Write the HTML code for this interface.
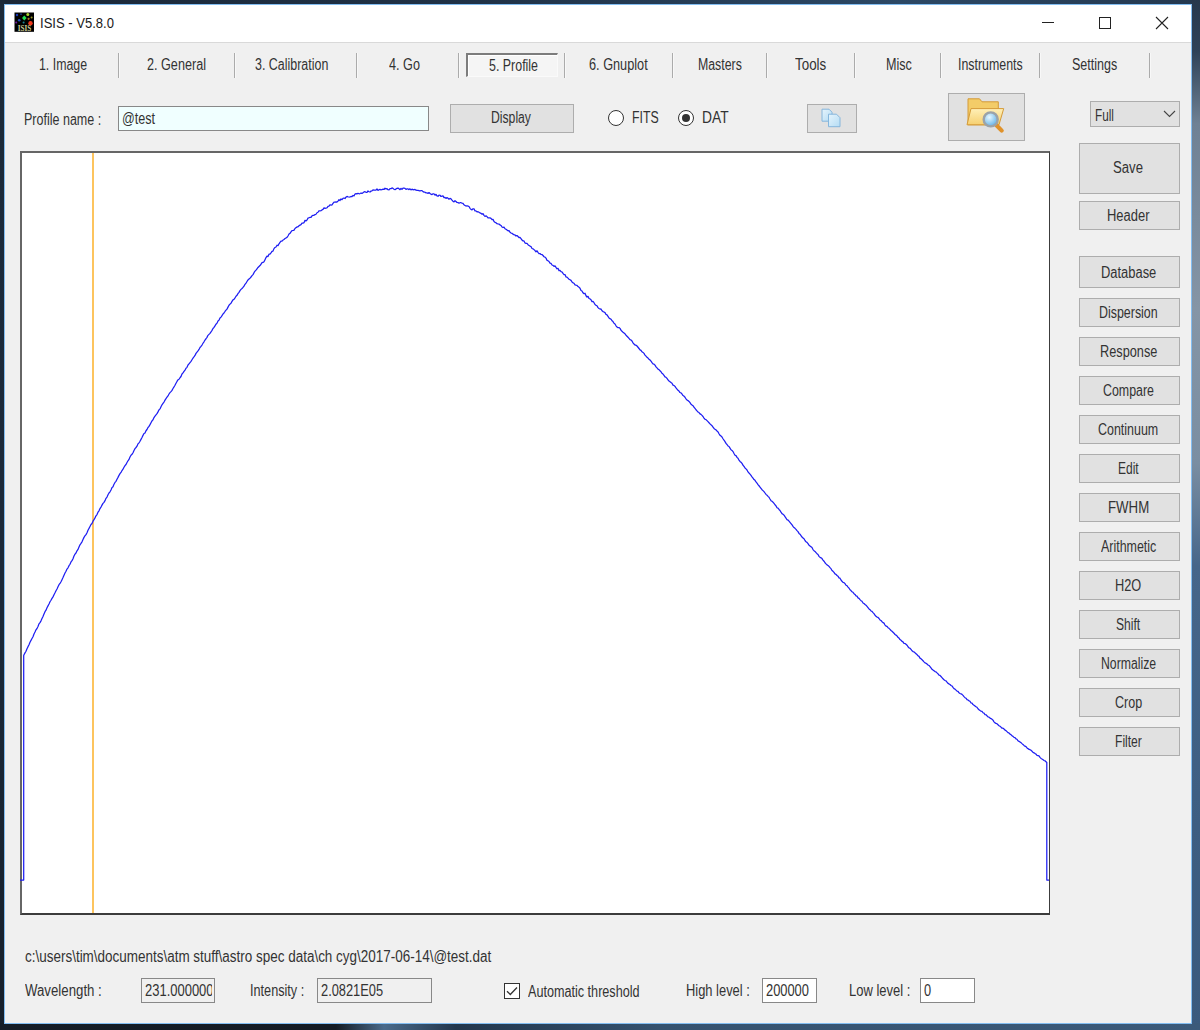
<!DOCTYPE html>
<html><head><meta charset="utf-8"><style>
html,body{margin:0;padding:0;}
body{width:1200px;height:1030px;position:relative;overflow:hidden;background:linear-gradient(90deg,#1b2a3b 0%,#22364c 60%,#3a5878 100%);font-family:"Liberation Sans",sans-serif;}
.t{position:absolute;white-space:pre;line-height:20px;transform-origin:0 15px;font-family:"Liberation Sans",sans-serif;}
</style></head><body>
<div style="position:absolute;left:0;top:0;width:1200px;height:6px;background:linear-gradient(90deg,#1b2838 0%,#203247 40%,#2c4865 75%,#24384f 100%)"></div>
<div style="position:absolute;left:0;top:0;width:5px;height:1030px;background:linear-gradient(180deg,#1c2a3a 0%,#1b2939 60%,#161f2b 100%)"></div>
<div style="position:absolute;left:1191px;top:0;width:9px;height:1030px;background:linear-gradient(180deg,#26384c 0%,#2e4258 5%,#6f8194 12%,#8595a6 30%,#7a8ea2 45%,#46668a 55%,#3d5e82 80%,#3a5a7d 100%)"></div>
<div style="position:absolute;left:0;top:1023px;width:1200px;height:7px;background:linear-gradient(90deg,#151d27 0%,#141b24 28%,#4a6a8a 32%,#22364c 38%,#35526f 55%,#3b5a7a 100%)"></div>
<div style="position:absolute;left:4px;top:4px;width:1188px;height:1020px;box-sizing:border-box;border:1px solid #82bdf1;background:#f0f0f0"></div>
<div style="position:absolute;left:5px;top:5px;width:1186px;height:37px;background:#fff;border-bottom:1px solid #d9d9d9"></div>
<svg style="position:absolute;left:14px;top:12px" width="21" height="21" viewBox="0 0 21 21">
<rect x="0.5" y="0.5" width="19.5" height="19.3" fill="#000"/>
<circle cx="3" cy="3" r="1.2" fill="#1838b8"/><circle cx="7" cy="2.2" r="0.9" fill="#1a3a88"/>
<circle cx="13.8" cy="2.6" r="1.5" fill="#a8d030"/><circle cx="17.6" cy="5.6" r="1" fill="#9a9a28"/>
<path d="M10.3 3.6l2.3 2.4-2.3 2.4-2.3-2.4z" fill="#22e050"/><circle cx="14.6" cy="6.8" r="1.1" fill="#b07028"/>
<circle cx="5.2" cy="8.2" r="1.3" fill="#2050c0"/><circle cx="2.2" cy="10.6" r="1" fill="#6a1aa0"/>
<circle cx="9.6" cy="10.6" r="1" fill="#1a8898"/><circle cx="16.5" cy="11.2" r="2.2" fill="#f03a1e"/>
<text x="3.8" y="18.6" font-family="Liberation Serif" font-weight="bold" font-size="7.6" fill="#cfcf98" textLength="13.5" lengthAdjust="spacingAndGlyphs">ISIS</text>
</svg>
<div class="t" style="left:39.50px;top:13.00px;font-size:15.5px;color:#1a1a1a;transform:scaleX(0.8421);">ISIS - V5.8.0</div>
<div style="position:absolute;left:1042px;top:22px;width:12px;height:1px;box-sizing:border-box;background:#222;"></div>
<div style="position:absolute;left:1099px;top:17px;width:12px;height:12px;box-sizing:border-box;border:1px solid #222;"></div>
<svg style="position:absolute;left:1155px;top:16px" width="14" height="14" viewBox="0 0 14 14"><path d="M1 1L13 13M13 1L1 13" stroke="#222" stroke-width="1.1"/></svg>
<div style="position:absolute;left:118px;top:53px;width:1px;height:25px;box-sizing:border-box;background:#ababab;"></div>
<div style="position:absolute;left:119px;top:53px;width:1px;height:25px;box-sizing:border-box;background:#f8f8f8;"></div>
<div style="position:absolute;left:234px;top:53px;width:1px;height:25px;box-sizing:border-box;background:#ababab;"></div>
<div style="position:absolute;left:235px;top:53px;width:1px;height:25px;box-sizing:border-box;background:#f8f8f8;"></div>
<div style="position:absolute;left:356px;top:53px;width:1px;height:25px;box-sizing:border-box;background:#ababab;"></div>
<div style="position:absolute;left:357px;top:53px;width:1px;height:25px;box-sizing:border-box;background:#f8f8f8;"></div>
<div style="position:absolute;left:458px;top:53px;width:1px;height:25px;box-sizing:border-box;background:#ababab;"></div>
<div style="position:absolute;left:459px;top:53px;width:1px;height:25px;box-sizing:border-box;background:#f8f8f8;"></div>
<div style="position:absolute;left:564px;top:53px;width:1px;height:25px;box-sizing:border-box;background:#ababab;"></div>
<div style="position:absolute;left:565px;top:53px;width:1px;height:25px;box-sizing:border-box;background:#f8f8f8;"></div>
<div style="position:absolute;left:672px;top:53px;width:1px;height:25px;box-sizing:border-box;background:#ababab;"></div>
<div style="position:absolute;left:673px;top:53px;width:1px;height:25px;box-sizing:border-box;background:#f8f8f8;"></div>
<div style="position:absolute;left:766px;top:53px;width:1px;height:25px;box-sizing:border-box;background:#ababab;"></div>
<div style="position:absolute;left:767px;top:53px;width:1px;height:25px;box-sizing:border-box;background:#f8f8f8;"></div>
<div style="position:absolute;left:854px;top:53px;width:1px;height:25px;box-sizing:border-box;background:#ababab;"></div>
<div style="position:absolute;left:855px;top:53px;width:1px;height:25px;box-sizing:border-box;background:#f8f8f8;"></div>
<div style="position:absolute;left:940px;top:53px;width:1px;height:25px;box-sizing:border-box;background:#ababab;"></div>
<div style="position:absolute;left:941px;top:53px;width:1px;height:25px;box-sizing:border-box;background:#f8f8f8;"></div>
<div style="position:absolute;left:1039px;top:53px;width:1px;height:25px;box-sizing:border-box;background:#ababab;"></div>
<div style="position:absolute;left:1040px;top:53px;width:1px;height:25px;box-sizing:border-box;background:#f8f8f8;"></div>
<div style="position:absolute;left:1149px;top:53px;width:1px;height:25px;box-sizing:border-box;background:#ababab;"></div>
<div style="position:absolute;left:1150px;top:53px;width:1px;height:25px;box-sizing:border-box;background:#f8f8f8;"></div>
<div style="position:absolute;left:466px;top:53px;width:92px;height:24px;box-sizing:border-box;border-top:2px solid #7c7c7c;border-left:2px solid #7c7c7c;border-right:1px solid #fafafa;border-bottom:1px solid #fafafa;background:#f5f5f5;box-shadow:inset 1px 1px 0 #fff"></div>
<div class="t" style="left:38.50px;top:55.00px;font-size:16px;color:#333;transform:scaleX(0.7711);">1. Image</div>
<div class="t" style="left:146.90px;top:55.00px;font-size:16px;color:#333;transform:scaleX(0.7893);">2. General</div>
<div class="t" style="left:255.00px;top:55.00px;font-size:16px;color:#333;transform:scaleX(0.7777);">3. Calibration</div>
<div class="t" style="left:388.75px;top:55.00px;font-size:16px;color:#333;transform:scaleX(0.7898);">4. Go</div>
<div class="t" style="left:488.60px;top:56.00px;font-size:16px;color:#333;transform:scaleX(0.7762);">5. Profile</div>
<div class="t" style="left:589.20px;top:55.00px;font-size:16px;color:#333;transform:scaleX(0.7946);">6. Gnuplot</div>
<div class="t" style="left:697.90px;top:55.00px;font-size:16px;color:#333;transform:scaleX(0.7701);">Masters</div>
<div class="t" style="left:795.00px;top:55.00px;font-size:16px;color:#333;transform:scaleX(0.8361);">Tools</div>
<div class="t" style="left:886.25px;top:55.00px;font-size:16px;color:#333;transform:scaleX(0.7878);">Misc</div>
<div class="t" style="left:958.00px;top:55.00px;font-size:16px;color:#333;transform:scaleX(0.7737);">Instruments</div>
<div class="t" style="left:1072.30px;top:55.00px;font-size:16px;color:#333;transform:scaleX(0.7810);">Settings</div>
<div class="t" style="left:24.40px;top:110.00px;font-size:16px;color:#333;transform:scaleX(0.7818);">Profile name :</div>
<div style="position:absolute;left:118px;top:106px;width:311px;height:25px;box-sizing:border-box;background:#f0ffff;border:1px solid #888;"></div>
<div class="t" style="left:121.50px;top:109.00px;font-size:16px;color:#333;transform:scaleX(0.7857);">@test</div>
<div style="position:absolute;left:450px;top:104px;width:124px;height:29px;box-sizing:border-box;background:#e1e1e1;border:1px solid #adadad;"></div>
<div class="t" style="left:490.80px;top:108.00px;font-size:16px;color:#333;transform:scaleX(0.7619);">Display</div>
<div style="position:absolute;left:607.5px;top:109.5px;width:16px;height:16px;box-sizing:border-box;border:1px solid #333;border-radius:50%;background:#fff"></div>
<div class="t" style="left:631.50px;top:108.00px;font-size:16px;color:#333;transform:scaleX(0.7682);">FITS</div>
<div style="position:absolute;left:678px;top:109.5px;width:16px;height:16px;box-sizing:border-box;border:1px solid #333;border-radius:50%;background:#fff"></div>
<div style="position:absolute;left:682px;top:113.5px;width:8px;height:8px;border-radius:50%;background:#333"></div>
<div class="t" style="left:701.50px;top:108.00px;font-size:16px;color:#333;transform:scaleX(0.8615);">DAT</div>
<div style="position:absolute;left:807px;top:104px;width:50px;height:29px;box-sizing:border-box;background:#e1e1e1;border:1px solid #adadad;"></div>
<svg style="position:absolute;left:820px;top:107px" width="24" height="24" viewBox="0 0 24 24">
<defs><linearGradient id="dg" x1="0" y1="0" x2="1" y2="1"><stop offset="0" stop-color="#e6f4fc"/><stop offset="1" stop-color="#b4dcf4"/></linearGradient></defs>
<path d="M2 2.2h7l3 3v9h-10z" fill="url(#dg)" stroke="#86b6dc" stroke-width="1"/>
<path d="M8.5 7.2h8l3.5 3.5v9h-11.5z" fill="url(#dg)" stroke="#86b6dc" stroke-width="1"/>
</svg>
<div style="position:absolute;left:948px;top:93px;width:77px;height:48px;box-sizing:border-box;background:#e1e1e1;border:1px solid #adadad;"></div>
<svg style="position:absolute;left:960px;top:94px" width="50" height="44" viewBox="0 0 50 44">
<defs><linearGradient id="fg" x1="0" y1="0" x2="0" y2="1"><stop offset="0" stop-color="#fff0b8"/><stop offset="1" stop-color="#f6d070"/></linearGradient>
<radialGradient id="lg" cx="0.4" cy="0.35" r="0.7"><stop offset="0" stop-color="#e8f8ff"/><stop offset="1" stop-color="#5aaee6"/></radialGradient></defs>
<path d="M8 4.8h11.5l2.5 3h16.3v23h-30.3z" fill="#f3cc68" stroke="#d49a38" stroke-width="1"/>
<path d="M7 30.8l4-16.2h32.7l-4.7 16.2z" fill="url(#fg)" stroke="#d49a38" stroke-width="1"/>
<path d="M35.5 30.2l6.2 6.4" stroke="#e0922a" stroke-width="4.2" stroke-linecap="round"/>
<circle cx="30.7" cy="25.4" r="7" fill="url(#lg)" stroke="#9ca3a8" stroke-width="2.4"/>
</svg>
<div style="position:absolute;left:1090px;top:101px;width:90px;height:26px;box-sizing:border-box;background:#e1e1e1;border:1px solid #adadad;"></div>
<div class="t" style="left:1095.00px;top:105.50px;font-size:16px;color:#333;transform:scaleX(0.7340);">Full</div>
<svg style="position:absolute;left:1163px;top:109px" width="13" height="10" viewBox="0 0 13 10"><path d="M1 2l5.5 5.5L12 2" fill="none" stroke="#444" stroke-width="1.1"/></svg>
<div style="position:absolute;left:1079px;top:143px;width:101px;height:51px;box-sizing:border-box;background:#e1e1e1;border:1px solid #adadad;"></div>
<div class="t" style="left:1113.30px;top:158.00px;font-size:16px;color:#333;transform:scaleX(0.8219);">Save</div>
<div style="position:absolute;left:1079px;top:201px;width:101px;height:29px;box-sizing:border-box;background:#e1e1e1;border:1px solid #adadad;"></div>
<div class="t" style="left:1107.05px;top:206.00px;font-size:16px;color:#333;transform:scaleX(0.8095);">Header</div>
<div style="position:absolute;left:1079px;top:256px;width:101px;height:32px;box-sizing:border-box;background:#e1e1e1;border:1px solid #adadad;"></div>
<div class="t" style="left:1100.65px;top:263.00px;font-size:16px;color:#333;transform:scaleX(0.8073);">Database</div>
<div style="position:absolute;left:1079px;top:298px;width:101px;height:29px;box-sizing:border-box;background:#e1e1e1;border:1px solid #adadad;"></div>
<div class="t" style="left:1098.95px;top:302.80px;font-size:16px;color:#333;transform:scaleX(0.7762);">Dispersion</div>
<div style="position:absolute;left:1079px;top:337px;width:101px;height:29px;box-sizing:border-box;background:#e1e1e1;border:1px solid #adadad;"></div>
<div class="t" style="left:1099.65px;top:341.80px;font-size:16px;color:#333;transform:scaleX(0.7958);">Response</div>
<div style="position:absolute;left:1079px;top:376px;width:101px;height:29px;box-sizing:border-box;background:#e1e1e1;border:1px solid #adadad;"></div>
<div class="t" style="left:1102.85px;top:380.80px;font-size:16px;color:#333;transform:scaleX(0.7741);">Compare</div>
<div style="position:absolute;left:1079px;top:415px;width:101px;height:29px;box-sizing:border-box;background:#e1e1e1;border:1px solid #adadad;"></div>
<div class="t" style="left:1098.20px;top:419.80px;font-size:16px;color:#333;transform:scaleX(0.7780);">Continuum</div>
<div style="position:absolute;left:1079px;top:454px;width:101px;height:29px;box-sizing:border-box;background:#e1e1e1;border:1px solid #adadad;"></div>
<div class="t" style="left:1117.95px;top:458.80px;font-size:16px;color:#333;transform:scaleX(0.7493);">Edit</div>
<div style="position:absolute;left:1079px;top:493px;width:101px;height:29px;box-sizing:border-box;background:#e1e1e1;border:1px solid #adadad;"></div>
<div class="t" style="left:1107.70px;top:497.80px;font-size:16px;color:#333;transform:scaleX(0.8281);">FWHM</div>
<div style="position:absolute;left:1079px;top:532px;width:101px;height:29px;box-sizing:border-box;background:#e1e1e1;border:1px solid #adadad;"></div>
<div class="t" style="left:1100.65px;top:536.80px;font-size:16px;color:#333;transform:scaleX(0.7775);">Arithmetic</div>
<div style="position:absolute;left:1079px;top:571px;width:101px;height:29px;box-sizing:border-box;background:#e1e1e1;border:1px solid #adadad;"></div>
<div class="t" style="left:1115.20px;top:575.80px;font-size:16px;color:#333;transform:scaleX(0.7970);">H2O</div>
<div style="position:absolute;left:1079px;top:610px;width:101px;height:29px;box-sizing:border-box;background:#e1e1e1;border:1px solid #adadad;"></div>
<div class="t" style="left:1116.25px;top:614.80px;font-size:16px;color:#333;transform:scaleX(0.7531);">Shift</div>
<div style="position:absolute;left:1079px;top:649px;width:101px;height:29px;box-sizing:border-box;background:#e1e1e1;border:1px solid #adadad;"></div>
<div class="t" style="left:1100.75px;top:653.80px;font-size:16px;color:#333;transform:scaleX(0.7653);">Normalize</div>
<div style="position:absolute;left:1079px;top:688px;width:101px;height:29px;box-sizing:border-box;background:#e1e1e1;border:1px solid #adadad;"></div>
<div class="t" style="left:1114.75px;top:692.80px;font-size:16px;color:#333;transform:scaleX(0.7827);">Crop</div>
<div style="position:absolute;left:1079px;top:727px;width:101px;height:29px;box-sizing:border-box;background:#e1e1e1;border:1px solid #adadad;"></div>
<div class="t" style="left:1114.90px;top:731.80px;font-size:16px;color:#333;transform:scaleX(0.7549);">Filter</div>
<div style="position:absolute;left:20px;top:151px;width:1030px;height:764px;box-sizing:border-box;background:#fff;border-style:solid;border-width:2px 1px 2px 2px;border-color:#666 #3c3c3c #3c3c3c #666"></div>
<div style="position:absolute;left:92px;top:153px;width:2px;height:760px;box-sizing:border-box;background:#fdc45e;"></div>
<svg style="position:absolute;left:0;top:0" width="1200" height="1030"><path d="M20 880 L23.7 880 L23.7 655.6 L24.0 654.83 L25.0 652.86 L26.0 651.22 L27.0 648.76 L28.0 646.65 L29.0 644.67 L30.0 642.19 L31.0 640.40 L32.0 638.55 L33.0 636.75 L34.0 634.00 L35.0 632.02 L36.0 629.78 L37.0 628.50 L38.0 626.54 L39.0 623.82 L40.0 622.67 L41.0 620.86 L42.0 618.57 L43.0 616.46 L44.0 613.94 L45.0 611.66 L46.0 610.17 L47.0 607.80 L48.0 605.87 L49.0 603.97 L50.0 601.78 L51.0 600.24 L52.0 598.37 L53.0 596.87 L54.0 594.68 L55.0 592.81 L56.0 590.73 L57.0 588.94 L58.0 586.81 L59.0 584.64 L60.0 583.44 L61.0 581.70 L62.0 579.66 L63.0 577.56 L64.0 575.18 L65.0 573.06 L66.0 571.17 L67.0 569.03 L68.0 567.84 L69.0 565.72 L70.0 564.27 L71.0 561.99 L72.0 560.64 L73.0 558.77 L74.0 555.97 L75.0 554.10 L76.0 553.01 L77.0 550.85 L78.0 549.48 L79.0 547.11 L80.0 544.78 L81.0 543.42 L82.0 541.86 L83.0 539.54 L84.0 537.38 L85.0 535.74 L86.0 534.65 L87.0 532.79 L88.0 530.25 L89.0 528.40 L90.0 526.42 L91.0 524.52 L92.0 523.51 L93.0 521.22 L94.0 519.72 L95.0 517.88 L96.0 515.79 L97.0 514.53 L98.0 512.21 L99.0 510.86 L100.0 508.61 L101.0 507.06 L102.0 505.11 L103.0 503.37 L104.0 502.38 L105.0 500.63 L106.0 498.33 L107.0 497.08 L108.0 494.71 L109.0 493.01 L110.0 491.79 L111.0 489.95 L112.0 487.59 L113.0 486.68 L114.0 484.31 L115.0 482.47 L116.0 481.28 L117.0 479.21 L118.0 477.37 L119.0 475.39 L120.0 473.63 L121.0 472.45 L122.0 470.51 L123.0 469.14 L124.0 467.28 L125.0 465.64 L126.0 464.52 L127.0 462.45 L128.0 460.77 L129.0 459.42 L130.0 457.07 L131.0 455.20 L132.0 454.31 L133.0 452.74 L134.0 450.48 L135.0 448.60 L136.0 447.50 L137.0 446.20 L138.0 443.82 L139.0 442.82 L140.0 441.27 L141.0 439.34 L142.0 437.43 L143.0 435.38 L144.0 433.57 L145.0 432.92 L146.0 430.74 L147.0 429.49 L148.0 427.48 L149.0 426.38 L150.0 424.65 L151.0 422.68 L152.0 420.85 L153.0 419.79 L154.0 417.61 L155.0 416.04 L156.0 414.82 L157.0 413.64 L158.0 411.90 L159.0 409.90 L160.0 408.92 L161.0 406.71 L162.0 404.76 L163.0 403.38 L164.0 402.05 L165.0 400.11 L166.0 398.58 L167.0 397.24 L168.0 395.96 L169.0 393.99 L170.0 392.59 L171.0 391.65 L172.0 390.36 L173.0 388.52 L174.0 386.94 L175.0 385.27 L176.0 383.22 L177.0 381.44 L178.0 379.82 L179.0 379.26 L180.0 377.74 L181.0 376.51 L182.0 374.02 L183.0 372.94 L184.0 371.36 L185.0 370.11 L186.0 368.21 L187.0 367.35 L188.0 365.00 L189.0 363.80 L190.0 362.58 L191.0 361.34 L192.0 359.73 L193.0 358.17 L194.0 356.76 L195.0 355.43 L196.0 353.36 L197.0 352.10 L198.0 350.92 L199.0 349.48 L200.0 347.52 L201.0 346.33 L202.0 345.02 L203.0 343.27 L204.0 341.79 L205.0 340.06 L206.0 338.75 L207.0 337.36 L208.0 335.34 L209.0 334.37 L210.0 333.42 L211.0 331.98 L212.0 330.37 L213.0 328.51 L214.0 327.35 L215.0 325.81 L216.0 324.20 L217.0 323.16 L218.0 320.99 L219.0 320.12 L220.0 318.04 L221.0 317.08 L222.0 315.65 L223.0 313.96 L224.0 312.99 L225.0 311.48 L226.0 310.18 L227.0 309.14 L228.0 307.10 L229.0 305.28 L230.0 304.11 L231.0 303.20 L232.0 301.41 L233.0 299.90 L234.0 299.31 L235.0 297.87 L236.0 296.25 L237.0 295.33 L238.0 293.47 L239.0 292.37 L240.0 290.58 L241.0 289.39 L242.0 288.51 L243.0 287.42 L244.0 286.13 L245.0 284.28 L246.0 283.06 L247.0 281.49 L248.0 279.94 L249.0 278.98 L250.0 278.16 L251.0 277.02 L252.0 275.64 L253.0 274.61 L254.0 272.68 L255.0 271.15 L256.0 270.15 L257.0 268.79 L258.0 267.47 L259.0 266.46 L260.0 265.53 L261.0 264.26 L262.0 262.69 L263.0 262.46 L264.0 261.82 L265.0 259.72 L266.0 257.58 L267.0 256.10 L268.0 256.56 L269.0 254.17 L270.0 254.07 L271.0 252.94 L272.0 251.31 L273.0 251.05 L274.0 248.63 L275.0 247.45 L276.0 247.00 L277.0 245.24 L278.0 245.63 L279.0 243.77 L280.0 242.35 L281.0 241.05 L282.0 241.14 L283.0 240.05 L284.0 239.41 L285.0 238.58 L286.0 237.95 L287.0 237.39 L288.0 236.00 L289.0 233.99 L290.0 233.35 L291.0 231.92 L292.0 230.55 L293.0 230.47 L294.0 230.28 L295.0 228.51 L296.0 227.62 L297.0 226.91 L298.0 226.81 L299.0 225.81 L300.0 225.14 L301.0 224.65 L302.0 223.21 L303.0 223.06 L304.0 222.67 L305.0 220.37 L306.0 220.91 L307.0 220.07 L308.0 218.13 L309.0 217.75 L310.0 217.46 L311.0 217.43 L312.0 215.84 L313.0 215.31 L314.0 215.29 L315.0 214.62 L316.0 214.26 L317.0 212.72 L318.0 212.24 L319.0 210.75 L320.0 210.95 L321.0 210.74 L322.0 209.88 L323.0 209.38 L324.0 207.81 L325.0 208.36 L326.0 208.24 L327.0 207.79 L328.0 206.39 L329.0 206.14 L330.0 204.75 L331.0 205.19 L332.0 204.81 L333.0 203.33 L334.0 202.06 L335.0 202.10 L336.0 201.98 L337.0 202.04 L338.0 201.15 L339.0 199.68 L340.0 200.54 L341.0 198.95 L342.0 199.71 L343.0 198.34 L344.0 198.02 L345.0 198.55 L346.0 197.10 L347.0 196.47 L348.0 196.78 L349.0 197.00 L350.0 197.03 L351.0 196.48 L352.0 196.60 L353.0 195.48 L354.0 195.88 L355.0 194.02 L356.0 193.60 L357.0 193.89 L358.0 193.28 L359.0 193.80 L360.0 193.55 L361.0 193.06 L362.0 193.39 L363.0 192.72 L364.0 191.88 L365.0 191.64 L366.0 192.35 L367.0 192.48 L368.0 190.97 L369.0 191.73 L370.0 192.02 L371.0 191.07 L372.0 190.80 L373.0 189.87 L374.0 190.19 L375.0 190.09 L376.0 190.17 L377.0 188.93 L378.0 190.41 L379.0 189.79 L380.0 189.32 L381.0 189.93 L382.0 189.53 L383.0 189.22 L384.0 189.49 L385.0 188.25 L386.0 188.84 L387.0 188.69 L388.0 189.71 L389.0 189.86 L390.0 188.57 L391.0 188.63 L392.0 187.94 L393.0 188.37 L394.0 189.24 L395.0 189.63 L396.0 188.89 L397.0 188.40 L398.0 188.04 L399.0 188.83 L400.0 189.67 L401.0 188.32 L402.0 189.32 L403.0 188.11 L404.0 188.20 L405.0 188.34 L406.0 189.36 L407.0 188.95 L408.0 188.98 L409.0 189.60 L410.0 188.81 L411.0 189.95 L412.0 189.11 L413.0 189.77 L414.0 189.52 L415.0 189.46 L416.0 190.22 L417.0 190.34 L418.0 190.38 L419.0 190.59 L420.0 191.00 L421.0 190.51 L422.0 190.62 L423.0 191.65 L424.0 192.07 L425.0 192.12 L426.0 192.94 L427.0 192.83 L428.0 193.47 L429.0 192.55 L430.0 193.52 L431.0 194.09 L432.0 194.61 L433.0 193.77 L434.0 193.76 L435.0 195.17 L436.0 194.33 L437.0 195.90 L438.0 196.29 L439.0 195.10 L440.0 195.25 L441.0 196.49 L442.0 196.11 L443.0 195.93 L444.0 197.61 L445.0 197.46 L446.0 198.42 L447.0 197.59 L448.0 198.21 L449.0 199.20 L450.0 198.38 L451.0 198.83 L452.0 200.19 L453.0 201.27 L454.0 201.95 L455.0 200.72 L456.0 201.49 L457.0 202.50 L458.0 202.55 L459.0 203.24 L460.0 202.74 L461.0 202.71 L462.0 203.10 L463.0 203.39 L464.0 204.83 L465.0 205.46 L466.0 206.07 L467.0 205.73 L468.0 206.07 L469.0 206.55 L470.0 208.31 L471.0 209.41 L472.0 209.94 L473.0 208.78 L474.0 208.80 L475.0 210.97 L476.0 210.92 L477.0 211.90 L478.0 211.67 L479.0 212.29 L480.0 212.94 L481.0 213.34 L482.0 214.20 L483.0 213.65 L484.0 215.31 L485.0 216.43 L486.0 215.81 L487.0 216.63 L488.0 217.84 L489.0 217.91 L490.0 217.95 L491.0 218.35 L492.0 219.59 L493.0 219.36 L494.0 221.52 L495.0 222.33 L496.0 222.81 L497.0 223.71 L498.0 223.94 L499.0 224.02 L500.0 224.91 L501.0 225.43 L502.0 227.00 L503.0 227.53 L504.0 227.06 L505.0 228.74 L506.0 229.33 L507.0 230.05 L508.0 230.81 L509.0 230.69 L510.0 232.16 L511.0 233.01 L512.0 233.37 L513.0 234.13 L514.0 234.85 L515.0 234.84 L516.0 236.00 L517.0 235.53 L518.0 236.49 L519.0 237.53 L520.0 237.42 L521.0 238.64 L522.0 240.06 L523.0 240.95 L524.0 240.94 L525.0 242.93 L526.0 243.44 L527.0 243.48 L528.0 244.71 L529.0 245.41 L530.0 246.09 L531.0 246.56 L532.0 248.48 L533.0 248.83 L534.0 249.63 L535.0 250.55 L536.0 251.81 L537.0 250.81 L538.0 252.35 L539.0 253.59 L540.0 253.54 L541.0 254.43 L542.0 254.57 L543.0 255.51 L544.0 256.73 L545.0 257.10 L546.0 258.13 L547.0 260.32 L548.0 260.79 L549.0 261.46 L550.0 263.18 L551.0 263.46 L552.0 265.02 L553.0 265.34 L554.0 266.42 L555.0 265.87 L556.0 267.43 L557.0 268.80 L558.0 268.37 L559.0 270.69 L560.0 270.40 L561.0 271.61 L562.0 271.98 L563.0 273.39 L564.0 274.65 L565.0 274.54 L566.0 276.96 L567.0 277.20 L568.0 278.15 L569.0 279.22 L570.0 279.71 L571.0 280.36 L572.0 281.95 L573.0 282.86 L574.0 283.22 L575.0 284.88 L576.0 285.15 L577.0 285.36 L578.0 286.58 L579.0 287.18 L580.0 288.27 L581.0 290.45 L582.0 290.98 L583.0 292.84 L584.0 293.72 L585.0 293.27 L586.0 295.75 L587.0 297.01 L588.0 296.30 L589.0 298.52 L590.0 298.85 L591.0 299.75 L592.0 301.70 L593.0 301.46 L594.0 302.70 L595.0 304.57 L596.0 305.35 L597.0 305.78 L598.0 307.64 L599.0 308.53 L600.0 309.07 L601.0 308.98 L602.0 310.72 L603.0 311.57 L604.0 312.02 L605.0 312.59 L606.0 314.43 L607.0 314.84 L608.0 316.34 L609.0 317.92 L610.0 318.65 L611.0 319.21 L612.0 320.75 L613.0 321.57 L614.0 323.26 L615.0 323.96 L616.0 325.83 L617.0 326.98 L618.0 327.60 L619.0 327.53 L620.0 328.38 L621.0 330.23 L622.0 331.34 L623.0 332.22 L624.0 332.93 L625.0 333.78 L626.0 335.23 L627.0 336.24 L628.0 337.30 L629.0 338.39 L630.0 339.58 L631.0 340.04 L632.0 341.00 L633.0 342.83 L634.0 344.01 L635.0 345.04 L636.0 345.17 L637.0 346.01 L638.0 347.24 L639.0 348.51 L640.0 349.83 L641.0 350.38 L642.0 351.79 L643.0 352.42 L644.0 353.39 L645.0 355.07 L646.0 356.14 L647.0 357.30 L648.0 358.10 L649.0 359.21 L650.0 359.98 L651.0 361.12 L652.0 362.64 L653.0 363.92 L654.0 364.20 L655.0 365.12 L656.0 366.90 L657.0 367.94 L658.0 369.16 L659.0 369.65 L660.0 370.81 L661.0 371.71 L662.0 373.35 L663.0 374.07 L664.0 375.36 L665.0 376.85 L666.0 377.30 L667.0 378.45 L668.0 379.76 L669.0 381.08 L670.0 381.67 L671.0 382.55 L672.0 383.27 L673.0 385.11 L674.0 385.49 L675.0 386.39 L676.0 387.94 L677.0 389.05 L678.0 390.34 L679.0 391.04 L680.0 392.54 L681.0 392.94 L682.0 393.99 L683.0 395.54 L684.0 396.09 L685.0 397.27 L686.0 398.83 L687.0 399.98 L688.0 400.61 L689.0 401.41 L690.0 402.64 L691.0 404.15 L692.0 404.93 L693.0 405.64 L694.0 407.27 L695.0 408.31 L696.0 409.75 L697.0 410.92 L698.0 411.98 L699.0 412.51 L700.0 413.84 L701.0 414.41 L702.0 415.35 L703.0 416.47 L704.0 418.12 L705.0 419.28 L706.0 419.64 L707.0 420.64 L708.0 421.68 L709.0 422.72 L710.0 423.80 L711.0 424.84 L712.0 425.67 L713.0 427.06 L714.0 428.44 L715.0 429.28 L716.0 429.87 L717.0 430.99 L718.0 431.86 L719.0 433.73 L720.0 435.33 L721.0 436.08 L722.0 436.99 L723.0 438.76 L724.0 440.23 L725.0 441.62 L726.0 443.41 L727.0 444.50 L728.0 445.93 L729.0 446.47 L730.0 448.12 L731.0 449.79 L732.0 450.41 L733.0 451.55 L734.0 453.53 L735.0 455.19 L736.0 455.68 L737.0 457.38 L738.0 458.24 L739.0 460.09 L740.0 461.42 L741.0 462.27 L742.0 463.42 L743.0 465.27 L744.0 466.43 L745.0 467.95 L746.0 468.88 L747.0 470.00 L748.0 471.93 L749.0 473.04 L750.0 474.08 L751.0 475.33 L752.0 476.79 L753.0 478.09 L754.0 479.59 L755.0 480.35 L756.0 481.93 L757.0 483.09 L758.0 484.52 L759.0 485.76 L760.0 487.04 L761.0 488.35 L762.0 489.68 L763.0 490.59 L764.0 491.62 L765.0 493.00 L766.0 494.37 L767.0 495.21 L768.0 496.34 L769.0 497.24 L770.0 499.03 L771.0 500.67 L772.0 501.31 L773.0 502.15 L774.0 503.31 L775.0 504.75 L776.0 505.87 L777.0 507.79 L778.0 508.18 L779.0 509.44 L780.0 510.45 L781.0 512.18 L782.0 513.65 L783.0 514.25 L784.0 515.16 L785.0 516.71 L786.0 518.13 L787.0 519.72 L788.0 520.04 L789.0 521.09 L790.0 522.31 L791.0 523.53 L792.0 524.73 L793.0 526.44 L794.0 527.60 L795.0 528.36 L796.0 529.37 L797.0 530.60 L798.0 531.66 L799.0 533.43 L800.0 534.24 L801.0 535.57 L802.0 537.06 L803.0 537.92 L804.0 538.75 L805.0 540.50 L806.0 541.82 L807.0 542.37 L808.0 543.59 L809.0 545.19 L810.0 545.91 L811.0 546.65 L812.0 547.49 L813.0 549.53 L814.0 550.72 L815.0 551.40 L816.0 552.56 L817.0 553.68 L818.0 554.52 L819.0 556.35 L820.0 557.28 L821.0 557.87 L822.0 558.60 L823.0 560.12 L824.0 561.21 L825.0 562.77 L826.0 563.89 L827.0 564.88 L828.0 565.44 L829.0 566.40 L830.0 567.64 L831.0 568.69 L832.0 570.44 L833.0 571.30 L834.0 572.45 L835.0 573.94 L836.0 574.32 L837.0 575.51 L838.0 576.19 L839.0 577.84 L840.0 578.21 L841.0 580.00 L842.0 581.27 L843.0 582.36 L844.0 582.61 L845.0 583.67 L846.0 585.22 L847.0 585.71 L848.0 587.05 L849.0 588.15 L850.0 589.75 L851.0 590.52 L852.0 591.80 L853.0 592.29 L854.0 593.72 L855.0 594.45 L856.0 595.95 L857.0 596.20 L858.0 597.84 L859.0 598.34 L860.0 599.60 L861.0 600.67 L862.0 601.30 L863.0 602.96 L864.0 603.57 L865.0 604.48 L866.0 605.21 L867.0 606.41 L868.0 607.64 L869.0 608.98 L870.0 609.68 L871.0 610.97 L872.0 611.40 L873.0 612.58 L874.0 613.69 L875.0 615.28 L876.0 616.27 L877.0 617.07 L878.0 617.31 L879.0 618.51 L880.0 619.92 L881.0 620.49 L882.0 621.73 L883.0 622.66 L884.0 623.14 L885.0 625.07 L886.0 626.07 L887.0 626.40 L888.0 627.67 L889.0 628.35 L890.0 629.35 L891.0 630.50 L892.0 631.25 L893.0 632.20 L894.0 633.22 L895.0 634.50 L896.0 635.09 L897.0 635.89 L898.0 637.39 L899.0 638.04 L900.0 639.59 L901.0 640.27 L902.0 641.33 L903.0 641.88 L904.0 643.27 L905.0 643.51 L906.0 644.33 L907.0 645.19 L908.0 646.75 L909.0 647.88 L910.0 648.28 L911.0 649.32 L912.0 650.76 L913.0 651.55 L914.0 651.89 L915.0 652.82 L916.0 653.67 L917.0 654.53 L918.0 655.75 L919.0 656.38 L920.0 658.16 L921.0 658.75 L922.0 659.67 L923.0 660.74 L924.0 661.82 L925.0 662.83 L926.0 663.28 L927.0 664.02 L928.0 664.97 L929.0 665.45 L930.0 666.67 L931.0 667.97 L932.0 669.28 L933.0 670.07 L934.0 670.80 L935.0 671.59 L936.0 671.81 L937.0 672.88 L938.0 673.82 L939.0 675.06 L940.0 675.44 L941.0 676.49 L942.0 677.56 L943.0 678.80 L944.0 679.80 L945.0 680.48 L946.0 680.81 L947.0 682.21 L948.0 683.37 L949.0 683.92 L950.0 684.50 L951.0 685.45 L952.0 685.95 L953.0 687.35 L954.0 688.65 L955.0 689.10 L956.0 690.08 L957.0 691.10 L958.0 691.30 L959.0 692.81 L960.0 693.48 L961.0 693.81 L962.0 694.41 L963.0 695.37 L964.0 696.62 L965.0 697.69 L966.0 698.19 L967.0 699.61 L968.0 699.97 L969.0 700.81 L970.0 701.27 L971.0 702.95 L972.0 703.08 L973.0 704.58 L974.0 705.18 L975.0 705.98 L976.0 706.80 L977.0 707.30 L978.0 708.76 L979.0 709.83 L980.0 710.53 L981.0 711.08 L982.0 711.31 L983.0 712.76 L984.0 713.14 L985.0 714.52 L986.0 714.76 L987.0 715.80 L988.0 716.95 L989.0 717.14 L990.0 718.19 L991.0 718.55 L992.0 719.19 L993.0 720.12 L994.0 721.85 L995.0 722.83 L996.0 723.37 L997.0 723.72 L998.0 724.81 L999.0 725.75 L1000.0 726.20 L1001.0 727.14 L1002.0 728.20 L1003.0 728.20 L1004.0 728.99 L1005.0 730.08 L1006.0 730.59 L1007.0 731.58 L1008.0 732.62 L1009.0 733.03 L1010.0 734.10 L1011.0 734.68 L1012.0 735.74 L1013.0 736.34 L1014.0 737.41 L1015.0 737.60 L1016.0 738.93 L1017.0 739.26 L1018.0 740.83 L1019.0 741.40 L1020.0 741.98 L1021.0 742.64 L1022.0 743.62 L1023.0 744.51 L1024.0 745.39 L1025.0 746.17 L1026.0 746.65 L1027.0 747.91 L1028.0 748.62 L1029.0 749.39 L1030.0 749.66 L1031.0 750.33 L1032.0 751.21 L1033.0 752.37 L1034.0 752.81 L1035.0 753.49 L1036.0 754.12 L1037.0 755.36 L1038.0 755.59 L1039.0 755.92 L1040.0 757.31 L1041.0 758.41 L1042.0 759.06 L1043.0 759.63 L1044.0 760.50 L1045.0 760.79 L1046.0 761.73 L1046.8 762.5 L1046.8 880 L1049 880" fill="none" stroke="#1e1ef2" stroke-width="1.25" stroke-linejoin="round"/></svg>
<div class="t" style="left:24.50px;top:947.00px;font-size:16px;color:#333;transform:scaleX(0.8416);">c:\users\tim\documents\atm stuff\astro spec data\ch cyg\2017-06-14\@test.dat</div>
<div class="t" style="left:24.50px;top:981.00px;font-size:16px;color:#333;transform:scaleX(0.8275);">Wavelength :</div>
<div style="position:absolute;left:141px;top:978px;width:74px;height:25px;box-sizing:border-box;background:#f0f0f0;border:1px solid #888;"></div>
<div style="position:absolute;left:143px;top:979px;width:69px;height:23px;overflow:hidden">
<div class="t" style="left:1.75px;top:2.00px;font-size:16px;color:#333;transform:scaleX(0.8107);">231.000000</div>
</div>
<div class="t" style="left:249.50px;top:981.00px;font-size:16px;color:#333;transform:scaleX(0.7920);">Intensity :</div>
<div style="position:absolute;left:317px;top:978px;width:115px;height:25px;box-sizing:border-box;background:#f0f0f0;border:1px solid #888;"></div>
<div class="t" style="left:321.00px;top:981.00px;font-size:16px;color:#333;transform:scaleX(0.8013);">2.0821E05</div>
<div style="position:absolute;left:504px;top:983px;width:16px;height:16px;box-sizing:border-box;background:#fff;border:1px solid #333;"></div>
<svg style="position:absolute;left:504px;top:983px" width="16" height="16" viewBox="0 0 16 16"><path d="M3 8.2l3.3 3.3L13 4.5" fill="none" stroke="#333" stroke-width="1.3"/></svg>
<div class="t" style="left:528.00px;top:982.00px;font-size:16px;color:#333;transform:scaleX(0.7887);">Automatic threshold</div>
<div class="t" style="left:686.25px;top:981.00px;font-size:16px;color:#333;transform:scaleX(0.8057);">High level :</div>
<div style="position:absolute;left:762px;top:978px;width:55px;height:25px;box-sizing:border-box;background:#fff;border:1px solid #888;"></div>
<div class="t" style="left:766.00px;top:981.00px;font-size:16px;color:#333;transform:scaleX(0.8037);">200000</div>
<div class="t" style="left:848.80px;top:981.00px;font-size:16px;color:#333;transform:scaleX(0.8106);">Low level :</div>
<div style="position:absolute;left:920px;top:978px;width:55px;height:25px;box-sizing:border-box;background:#fff;border:1px solid #888;"></div>
<div class="t" style="left:924.20px;top:981.00px;font-size:16px;color:#333;transform:scaleX(0.8000);">0</div>
</body></html>
